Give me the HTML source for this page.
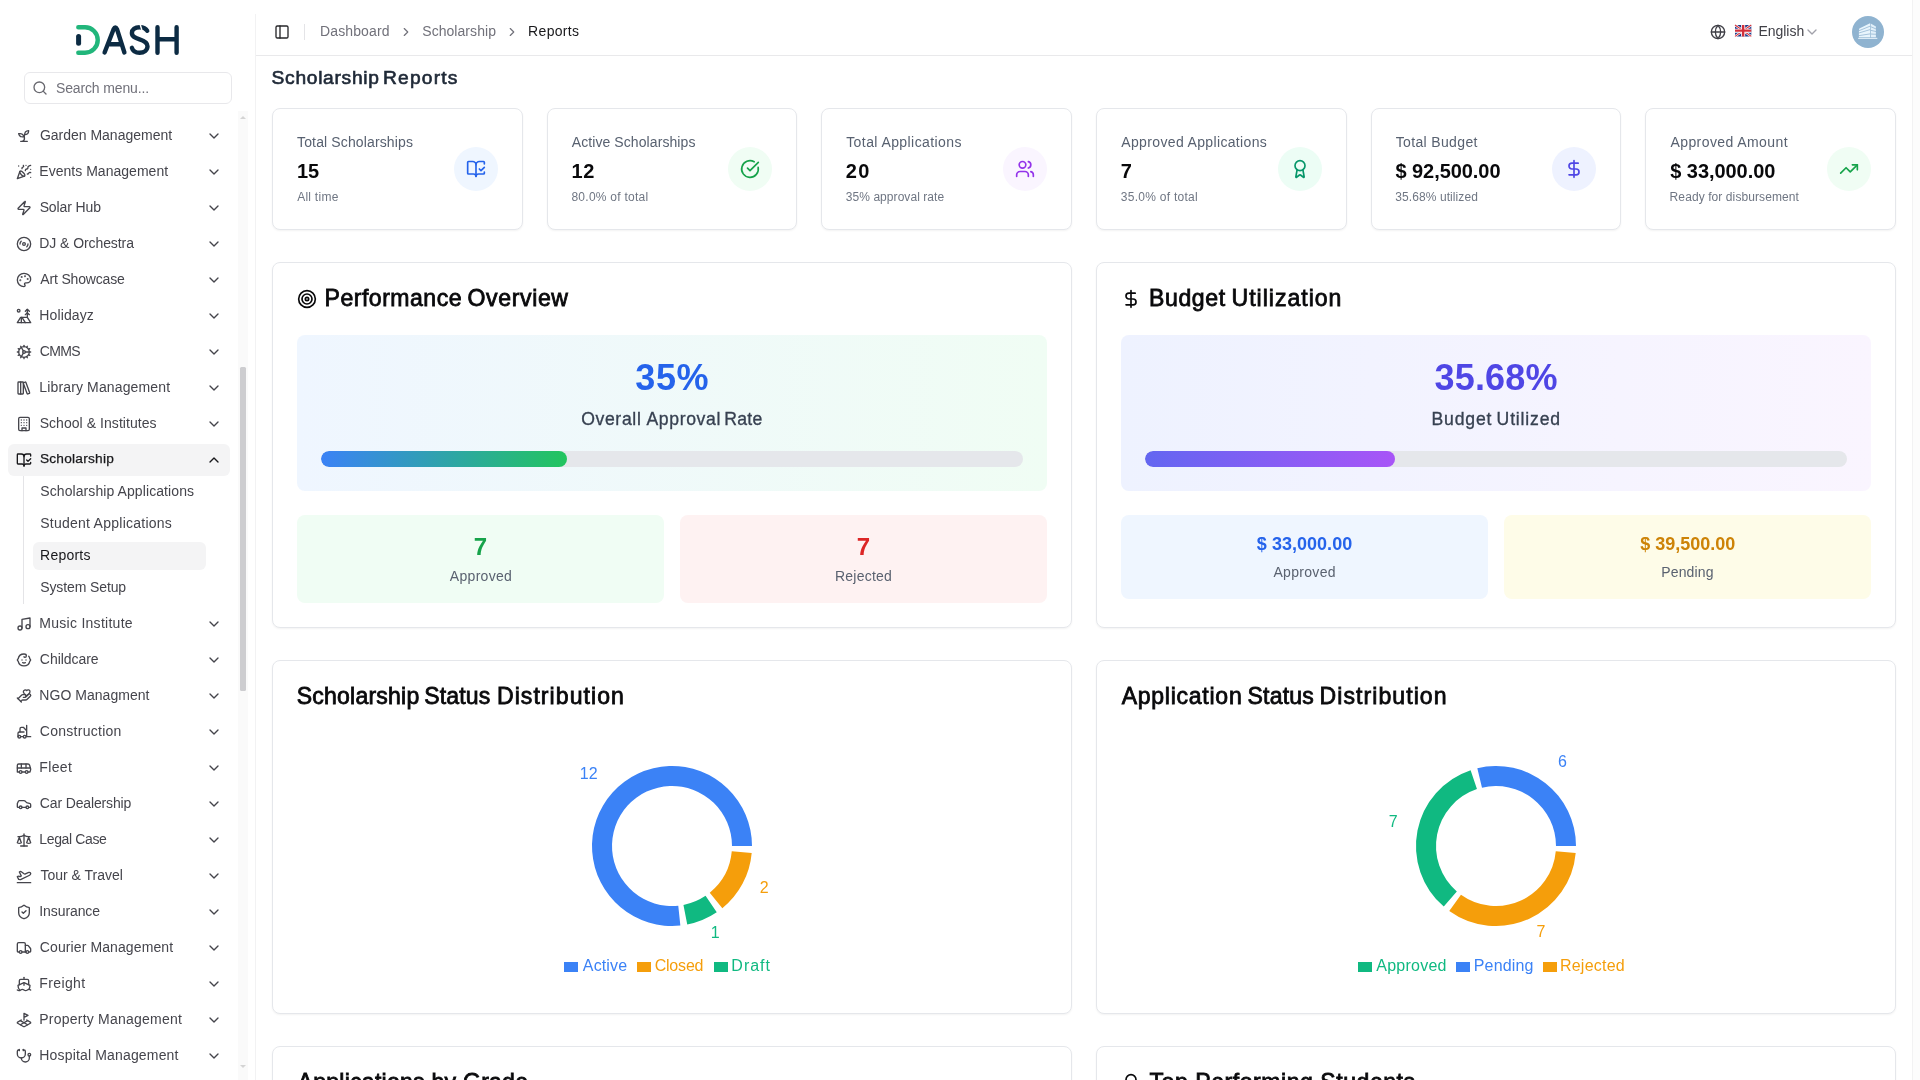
<!DOCTYPE html>
<html lang="en"><head><meta charset="utf-8"><title>Scholarship Reports</title>
<style>
*{box-sizing:border-box;margin:0;padding:0}
html,body{width:1920px;height:1080px;overflow:hidden;background:#fff;font-family:"Liberation Sans",sans-serif}
.sb{position:absolute;left:0;top:0;width:256px;height:1080px;will-change:transform}
.sb:after{content:"";position:absolute;left:255px;top:14px;width:1px;height:1066px;background:#f2f2f3}
main,header{position:absolute;left:0;top:0;width:1920px;will-change:transform}
main{height:1080px}
.hd{height:56px}
.hd:after{content:"";position:absolute;left:256px;top:55px;width:1656px;height:1px;background:#e9e9eb}
.ic{position:absolute;display:block;overflow:visible}
.t{position:absolute;white-space:nowrap;display:block}
.search{position:absolute;left:24px;top:72px;width:208px;height:32px;border:1px solid #e8e8eb;border-radius:6px;background:#fff}
.act{position:absolute;background:#f4f4f5;border-radius:6px}
.subline{position:absolute;left:23px;top:476px;width:1px;height:128px;background:#e4e4e7}
.sbtrack{position:absolute;left:238px;top:111px;width:10px;height:969px;background:#fafafa}
.sbthumb{position:absolute;left:240px;top:367px;width:6px;height:324px;background:#cdcdd0;border-radius:1.500px}
.arr{position:absolute;left:239.800px;width:0;height:0;border-left:3px solid transparent;border-right:3px solid transparent}
.arr.up{top:116px;border-bottom:3.500px solid #d4d4d4}
.arr.dn{top:1064.500px;border-top:3.500px solid #d4d4d4}
.sep{position:absolute;left:304px;top:24px;width:1px;height:16px;background:#e4e4e7}
.rstrip{position:absolute;left:1912px;top:0;width:8px;height:1080px;background:#fcfcfc;border-left:1px solid #f2f2f3}
.card{position:absolute;background:#fff;border:1px solid #e5e7eb;border-radius:8px;box-shadow:0 1px 2px rgba(0,0,0,.05)}
.circ{position:absolute;width:44px;height:44px;border-radius:50%}
.gbox{position:absolute;border-radius:8px}
.bar{position:absolute;height:16px;border-radius:8px;background:#e5e7eb;overflow:hidden}
.bar i{display:block;height:100%;border-radius:8px}
.lsq{position:absolute;top:961.700px;width:13.600px;height:10.500px}
</style></head>
<body>
<aside class="sb">
<svg class="ic" style="left:60px;top:10px;width:140px;height:60px" viewBox="60 10 140 60" fill="none" stroke-linecap="round" stroke-linejoin="round">
<path d="M78.3 27.2H85A12.75 12.75 0 0 1 85 52.7H78.3" stroke="#21b67b" stroke-width="4.4"/>
<path d="M78.6 36.6V43.2" stroke="#0c2b43" stroke-width="5"/>
<g stroke="#0c2b43" stroke-width="4.4">
<path d="M104.6 52.5 113.6 29.2Q115.3 25.6 117 29.2L124.4 52.5"/><path d="M110 44.2H120.6"/>
<path d="M147.2 30.8C146 28.6 143 27.2 139.6 27.2 135 27.2 131.9 29.6 131.9 33 131.9 36.6 135 37.9 139.6 39.3 144.2 40.7 147.5 42.2 147.5 46.3 147.5 50.1 144 52.7 139.6 52.700 135.600 52.7 132.800 50.800 131.900 47.800"/>
<path d="M157.500 27.200V52.700M176.600 27.200V52.700M157.500 39.300H176.600"/>
</g><path d="M140.100 24.300 141.900 30" stroke="#fff" stroke-width="1.400" stroke-linecap="butt"/></svg>
<div class="search"></div>
<svg class="ic" style="left:31.6px;top:79.8px;width:16px;height:16px;color:#68686f" viewBox="0 0 24 24" fill="none" stroke="currentColor" stroke-width="2" stroke-linecap="round" stroke-linejoin="round"><circle cx="11" cy="11" r="8"/><path d="m21 21-4.300-4.300"/></svg>
<span class="t" id="t0" style="left:56.02px;top:78.65px;font-size:14.0px;line-height:18px;font-weight:400;color:#71717a;letter-spacing:-0.144px">Search menu...</span>
<svg class="ic" style="left:16px;top:128px;width:16px;height:16px;color:#45454c" viewBox="0 0 24 24" fill="none" stroke="currentColor" stroke-width="2" stroke-linecap="round" stroke-linejoin="round"><path d="M7 20h10"/><path d="M10 20c5.5-2.5.8-6.4 3-10"/><path d="M9.5 9.4c1.1.8 1.8 2.2 2.3 3.7-2 .4-3.5.4-4.8-.3-1.200-.6-2.300-1.900-3-4.200 2.800-.5 4.400 0 5.500.8z"/><path d="M14.1 6a7 7 0 0 0-1.100 4c1.900-.1 3.300-.6 4.300-1.400 1-1 1.600-2.300 1.700-4.600-2.700.1-4 1-4.900 2z"/></svg>
<span class="t" id="t1" style="left:39.88px;top:126.15px;font-size:14.0px;line-height:18px;font-weight:400;color:#45454c;letter-spacing:-0.006px">Garden Management</span>
<svg class="ic" style="left:206px;top:128px;width:16px;height:16px;color:#45454c" viewBox="0 0 24 24" fill="none" stroke="currentColor" stroke-width="2" stroke-linecap="round" stroke-linejoin="round"><path d="m6 9 6 6 6-6"/></svg>
<svg class="ic" style="left:16px;top:164px;width:16px;height:16px;color:#45454c" viewBox="0 0 24 24" fill="none" stroke="currentColor" stroke-width="2" stroke-linecap="round" stroke-linejoin="round"><path d="M5.8 11.3 2 22l10.700-3.790"/><path d="M4 3h.01"/><path d="M22 8h.01"/><path d="M15 2h.01"/><path d="M22 20h.01"/><path d="m22 2-2.240.750a2.900 2.900 0 0 0-1.960 3.120c.1.860-.570 1.630-1.450 1.630h-.380c-.860 0-1.600.600-1.760 1.440L14 10"/><path d="m22 13-.820-.330c-.860-.340-1.820.200-1.980 1.110c-.110.700-.720 1.220-1.430 1.220H17"/><path d="m11 2 .330.820c.340.860-.200 1.820-1.110 1.980C9.520 4.900 9 5.520 9 6.230V7"/><path d="M11 13c1.930 1.930 2.830 4.170 2 5-.830.830-3.070-.070-5-2-1.930-1.930-2.830-4.170-2-5 .830-.830 3.070.070 5 2Z"/></svg>
<span class="t" id="t2" style="left:39.32px;top:162.15px;font-size:14.0px;line-height:18px;font-weight:400;color:#45454c;letter-spacing:0.023px">Events Management</span>
<svg class="ic" style="left:206px;top:164px;width:16px;height:16px;color:#45454c" viewBox="0 0 24 24" fill="none" stroke="currentColor" stroke-width="2" stroke-linecap="round" stroke-linejoin="round"><path d="m6 9 6 6 6-6"/></svg>
<svg class="ic" style="left:16px;top:200px;width:16px;height:16px;color:#45454c" viewBox="0 0 24 24" fill="none" stroke="currentColor" stroke-width="2" stroke-linecap="round" stroke-linejoin="round"><path d="M4 14a1 1 0 0 1-.78-1.630l9.900-10.200a.5.5 0 0 1 .860.460l-1.920 6.020A1 1 0 0 0 13 10h7a1 1 0 0 1 .780 1.630l-9.900 10.200a.5.5 0 0 1-.860-.460l1.920-6.020A1 1 0 0 0 11 14z"/></svg>
<span class="t" id="t3" style="left:39.64px;top:198.15px;font-size:14.0px;line-height:18px;font-weight:400;color:#45454c;letter-spacing:-0.116px">Solar Hub</span>
<svg class="ic" style="left:206px;top:200px;width:16px;height:16px;color:#45454c" viewBox="0 0 24 24" fill="none" stroke="currentColor" stroke-width="2" stroke-linecap="round" stroke-linejoin="round"><path d="m6 9 6 6 6-6"/></svg>
<svg class="ic" style="left:16px;top:236px;width:16px;height:16px;color:#45454c" viewBox="0 0 24 24" fill="none" stroke="currentColor" stroke-width="2" stroke-linecap="round" stroke-linejoin="round"><circle cx="12" cy="12" r="10"/><path d="M6 12c0-1.700.700-3.200 1.800-4.200"/><circle cx="12" cy="12" r="2"/><path d="M18 12c0 1.700-.700 3.200-1.800 4.200"/></svg>
<span class="t" id="t4" style="left:39.32px;top:234.15px;font-size:14.0px;line-height:18px;font-weight:400;color:#45454c;letter-spacing:-0.081px">DJ &amp; Orchestra</span>
<svg class="ic" style="left:206px;top:236px;width:16px;height:16px;color:#45454c" viewBox="0 0 24 24" fill="none" stroke="currentColor" stroke-width="2" stroke-linecap="round" stroke-linejoin="round"><path d="m6 9 6 6 6-6"/></svg>
<svg class="ic" style="left:16px;top:272px;width:16px;height:16px;color:#45454c" viewBox="0 0 24 24" fill="none" stroke="currentColor" stroke-width="2" stroke-linecap="round" stroke-linejoin="round"><circle cx="13.5" cy="6.5" r=".5" fill="currentColor"/><circle cx="17.5" cy="10.5" r=".5" fill="currentColor"/><circle cx="8.5" cy="7.5" r=".5" fill="currentColor"/><circle cx="6.5" cy="12.5" r=".5" fill="currentColor"/><path d="M12 2C6.5 2 2 6.5 2 12s4.500 10 10 10c.926 0 1.648-.746 1.648-1.688 0-.437-.180-.835-.437-1.125-.290-.289-.438-.652-.438-1.125a1.640 1.640 0 0 1 1.668-1.668h1.996c3.051 0 5.555-2.503 5.555-5.554C21.965 6.012 17.461 2 12 2z"/></svg>
<span class="t" id="t5" style="left:40.24px;top:270.15px;font-size:14.0px;line-height:18px;font-weight:400;color:#45454c;letter-spacing:-0.157px">Art Showcase</span>
<svg class="ic" style="left:206px;top:272px;width:16px;height:16px;color:#45454c" viewBox="0 0 24 24" fill="none" stroke="currentColor" stroke-width="2" stroke-linecap="round" stroke-linejoin="round"><path d="m6 9 6 6 6-6"/></svg>
<svg class="ic" style="left:16px;top:308px;width:16px;height:16px;color:#45454c" viewBox="0 0 24 24" fill="none" stroke="currentColor" stroke-width="2" stroke-linecap="round" stroke-linejoin="round"><circle cx="4" cy="4" r="2"/><path d="m14 5 3-3 3 3"/><path d="m14 10 3-3 3 3"/><path d="M17 14V2"/><path d="M17 14H7l-5 8h20Z"/><path d="M8 14v8"/><path d="m9 14 5 8"/></svg>
<span class="t" id="t6" style="left:39.32px;top:306.15px;font-size:14.0px;line-height:18px;font-weight:400;color:#45454c;letter-spacing:0.114px">Holidayz</span>
<svg class="ic" style="left:206px;top:308px;width:16px;height:16px;color:#45454c" viewBox="0 0 24 24" fill="none" stroke="currentColor" stroke-width="2" stroke-linecap="round" stroke-linejoin="round"><path d="m6 9 6 6 6-6"/></svg>
<svg class="ic" style="left:16px;top:344px;width:16px;height:16px;color:#45454c" viewBox="0 0 24 24" fill="none" stroke="currentColor" stroke-width="2" stroke-linecap="round" stroke-linejoin="round"><path d="M12 20a8 8 0 1 0 0-16 8 8 0 0 0 0 16Z"/><path d="M12 14a2 2 0 1 0 0-4 2 2 0 0 0 0 4Z"/><path d="M12 2v2"/><path d="M12 22v-2"/><path d="m17 20.660-1-1.730"/><path d="M11 10.270 7 3.340"/><path d="m20.660 17-1.730-1"/><path d="m3.340 7 1.730 1"/><path d="M14 12h8"/><path d="M2 12h2"/><path d="m20.660 7-1.730 1"/><path d="m3.340 17 1.730-1"/><path d="m17 3.340-1 1.730"/><path d="m11 13.730-4 6.930"/></svg>
<span class="t" id="t7" style="left:39.84px;top:342.15px;font-size:14.0px;line-height:18px;font-weight:400;color:#45454c;letter-spacing:-0.704px">CMMS</span>
<svg class="ic" style="left:206px;top:344px;width:16px;height:16px;color:#45454c" viewBox="0 0 24 24" fill="none" stroke="currentColor" stroke-width="2" stroke-linecap="round" stroke-linejoin="round"><path d="m6 9 6 6 6-6"/></svg>
<svg class="ic" style="left:16px;top:380px;width:16px;height:16px;color:#45454c" viewBox="0 0 24 24" fill="none" stroke="currentColor" stroke-width="2" stroke-linecap="round" stroke-linejoin="round"><rect width="8" height="18" x="3" y="3" rx="1"/><path d="M7 3v18"/><path d="M20.4 18.9c.2.5-.1 1.100-.6 1.300l-1.900.7c-.5.2-1.100-.1-1.300-.6L11.100 5.100c-.2-.5.100-1.100.6-1.300l1.900-.7c.5-.2 1.100.1 1.300.6Z"/></svg>
<span class="t" id="t8" style="left:39.32px;top:378.15px;font-size:14.0px;line-height:18px;font-weight:400;color:#45454c;letter-spacing:0.140px">Library Management</span>
<svg class="ic" style="left:206px;top:380px;width:16px;height:16px;color:#45454c" viewBox="0 0 24 24" fill="none" stroke="currentColor" stroke-width="2" stroke-linecap="round" stroke-linejoin="round"><path d="m6 9 6 6 6-6"/></svg>
<svg class="ic" style="left:16px;top:416px;width:16px;height:16px;color:#45454c" viewBox="0 0 24 24" fill="none" stroke="currentColor" stroke-width="2" stroke-linecap="round" stroke-linejoin="round"><rect width="16" height="20" x="4" y="2" rx="2" ry="2"/><path d="M9 22v-4h6v4"/><path d="M8 6h.01"/><path d="M16 6h.01"/><path d="M12 6h.01"/><path d="M12 10h.01"/><path d="M12 14h.01"/><path d="M16 10h.01"/><path d="M16 14h.01"/><path d="M8 10h.01"/><path d="M8 14h.01"/></svg>
<span class="t" id="t9" style="left:39.64px;top:414.15px;font-size:14.0px;line-height:18px;font-weight:400;color:#45454c;letter-spacing:0.057px">School &amp; Institutes</span>
<svg class="ic" style="left:206px;top:416px;width:16px;height:16px;color:#45454c" viewBox="0 0 24 24" fill="none" stroke="currentColor" stroke-width="2" stroke-linecap="round" stroke-linejoin="round"><path d="m6 9 6 6 6-6"/></svg>
<div class="act" style="left:8px;top:444px;width:222px;height:32px"></div>
<svg class="ic" style="left:16px;top:452px;width:16px;height:16px;color:#18181b" viewBox="0 0 24 24" fill="none" stroke="currentColor" stroke-width="2" stroke-linecap="round" stroke-linejoin="round"><path d="M12 21V7"/><path d="m16 12 2 2 4-4"/><path d="M22 6V4a1 1 0 0 0-1-1h-5a4 4 0 0 0-4 4 4 4 0 0 0-4-4H3a1 1 0 0 0-1 1v13a1 1 0 0 0 1 1h6a3 3 0 0 1 3 3 3 3 0 0 1 3-3h6a1 1 0 0 0 1-1v-1.300"/></svg>
<span class="t" id="t10" style="left:39.90px;top:450.15px;font-size:13.7px;line-height:18px;font-weight:400;-webkit-text-stroke:0.25px #18181b;color:#18181b;letter-spacing:0.240px">Scholarship</span>
<svg class="ic" style="left:206px;top:452px;width:16px;height:16px;color:#18181b" viewBox="0 0 24 24" fill="none" stroke="currentColor" stroke-width="2" stroke-linecap="round" stroke-linejoin="round"><path d="m18 15-6-6-6 6"/></svg>
<svg class="ic" style="left:16px;top:616px;width:16px;height:16px;color:#45454c" viewBox="0 0 24 24" fill="none" stroke="currentColor" stroke-width="2" stroke-linecap="round" stroke-linejoin="round"><path d="M9 18V5l12-2v13"/><circle cx="6" cy="18" r="3"/><circle cx="18" cy="16" r="3"/></svg>
<span class="t" id="t11" style="left:39.32px;top:614.15px;font-size:14.0px;line-height:18px;font-weight:400;color:#45454c;letter-spacing:0.271px">Music Institute</span>
<svg class="ic" style="left:206px;top:616px;width:16px;height:16px;color:#45454c" viewBox="0 0 24 24" fill="none" stroke="currentColor" stroke-width="2" stroke-linecap="round" stroke-linejoin="round"><path d="m6 9 6 6 6-6"/></svg>
<svg class="ic" style="left:16px;top:652px;width:16px;height:16px;color:#45454c" viewBox="0 0 24 24" fill="none" stroke="currentColor" stroke-width="2" stroke-linecap="round" stroke-linejoin="round"><path d="M9 12h.01"/><path d="M15 12h.01"/><path d="M10 16c.5.3 1.200.5 2 .5s1.500-.2 2-.5"/><path d="M19 6.3a9 9 0 0 1 1.800 3.900 2 2 0 0 1 0 3.600 9 9 0 0 1-17.600 0 2 2 0 0 1 0-3.600A9 9 0 0 1 12 3c2 0 3.500 1.100 3.500 2.500s-.9 2.500-2 2.500c-.8 0-1.500-.4-1.500-1"/></svg>
<span class="t" id="t12" style="left:39.84px;top:650.15px;font-size:14.0px;line-height:18px;font-weight:400;color:#45454c;letter-spacing:-0.049px">Childcare</span>
<svg class="ic" style="left:206px;top:652px;width:16px;height:16px;color:#45454c" viewBox="0 0 24 24" fill="none" stroke="currentColor" stroke-width="2" stroke-linecap="round" stroke-linejoin="round"><path d="m6 9 6 6 6-6"/></svg>
<svg class="ic" style="left:16px;top:688px;width:16px;height:16px;color:#45454c" viewBox="0 0 24 24" fill="none" stroke="currentColor" stroke-width="2" stroke-linecap="round" stroke-linejoin="round"><path d="M11 14h2a2 2 0 1 0 0-4h-3c-.6 0-1.100.2-1.400.6L3 16"/><path d="m7 20 1.600-1.400c.3-.4.800-.6 1.400-.6h4c1.100 0 2.100-.4 2.800-1.200l4.600-4.400a2 2 0 0 0-2.750-2.910l-4.200 3.900"/><path d="m2 15 6 6"/><path d="M19.5 8.5c.7-.7 1.500-1.600 1.500-2.700A2.730 2.730 0 0 0 16 4a2.780 2.780 0 0 0-5 1.800c0 1.200.8 2 1.500 2.800L16 12Z"/></svg>
<span class="t" id="t13" style="left:39.32px;top:686.15px;font-size:14.0px;line-height:18px;font-weight:400;color:#45454c;letter-spacing:0.034px">NGO Managment</span>
<svg class="ic" style="left:206px;top:688px;width:16px;height:16px;color:#45454c" viewBox="0 0 24 24" fill="none" stroke="currentColor" stroke-width="2" stroke-linecap="round" stroke-linejoin="round"><path d="m6 9 6 6 6-6"/></svg>
<svg class="ic" style="left:16px;top:724px;width:16px;height:16px;color:#45454c" viewBox="0 0 24 24" fill="none" stroke="currentColor" stroke-width="2" stroke-linecap="round" stroke-linejoin="round"><path d="M12 12H5a2 2 0 0 0-2 2v5"/><circle cx="13" cy="19" r="2"/><circle cx="5" cy="19" r="2"/><path d="M8 19h3m5-17v17h6M6 12V7c0-1.100.9-2 2-2h3l5 5"/></svg>
<span class="t" id="t14" style="left:39.84px;top:722.15px;font-size:14.0px;line-height:18px;font-weight:400;color:#45454c;letter-spacing:0.270px">Construction</span>
<svg class="ic" style="left:206px;top:724px;width:16px;height:16px;color:#45454c" viewBox="0 0 24 24" fill="none" stroke="currentColor" stroke-width="2" stroke-linecap="round" stroke-linejoin="round"><path d="m6 9 6 6 6-6"/></svg>
<svg class="ic" style="left:16px;top:760px;width:16px;height:16px;color:#45454c" viewBox="0 0 24 24" fill="none" stroke="currentColor" stroke-width="2" stroke-linecap="round" stroke-linejoin="round"><path d="M8 6v6"/><path d="M15 6v6"/><path d="M2 12h19.600"/><path d="M18 18h3s.5-1.700.8-2.800c.1-.4.2-.8.2-1.200 0-.4-.1-.8-.2-1.200l-1.400-5C20.100 6.800 19.100 6 18 6H4a2 2 0 0 0-2 2v10h3"/><circle cx="7" cy="18" r="2"/><path d="M9 18h5"/><circle cx="16" cy="18" r="2"/></svg>
<span class="t" id="t15" style="left:39.32px;top:758.15px;font-size:14.0px;line-height:18px;font-weight:400;color:#45454c;letter-spacing:0.336px">Fleet</span>
<svg class="ic" style="left:206px;top:760px;width:16px;height:16px;color:#45454c" viewBox="0 0 24 24" fill="none" stroke="currentColor" stroke-width="2" stroke-linecap="round" stroke-linejoin="round"><path d="m6 9 6 6 6-6"/></svg>
<svg class="ic" style="left:16px;top:796px;width:16px;height:16px;color:#45454c" viewBox="0 0 24 24" fill="none" stroke="currentColor" stroke-width="2" stroke-linecap="round" stroke-linejoin="round"><path d="M19 17h2c.6 0 1-.4 1-1v-3c0-.9-.7-1.700-1.500-1.900C18.700 10.600 16 10 16 10s-1.300-1.400-2.200-2.300c-.5-.4-1.100-.7-1.800-.7H5c-.6 0-1.100.4-1.400.9l-1.400 2.900A3.700 3.700 0 0 0 2 12v4c0 .6.400 1 1 1h2"/><circle cx="7" cy="17" r="2"/><path d="M9 17h6"/><circle cx="17" cy="17" r="2"/></svg>
<span class="t" id="t16" style="left:39.84px;top:794.15px;font-size:14.0px;line-height:18px;font-weight:400;color:#45454c;letter-spacing:-0.142px">Car Dealership</span>
<svg class="ic" style="left:206px;top:796px;width:16px;height:16px;color:#45454c" viewBox="0 0 24 24" fill="none" stroke="currentColor" stroke-width="2" stroke-linecap="round" stroke-linejoin="round"><path d="m6 9 6 6 6-6"/></svg>
<svg class="ic" style="left:16px;top:832px;width:16px;height:16px;color:#45454c" viewBox="0 0 24 24" fill="none" stroke="currentColor" stroke-width="2" stroke-linecap="round" stroke-linejoin="round"><path d="m16 16 3-8 3 8c-.87.65-1.920 1-3 1s-2.130-.35-3-1Z"/><path d="m2 16 3-8 3 8c-.87.65-1.920 1-3 1s-2.130-.35-3-1Z"/><path d="M7 21h10"/><path d="M12 3v18"/><path d="M3 7h2c2 0 5-1 7-2 2 1 5 2 7 2h2"/></svg>
<span class="t" id="t17" style="left:39.32px;top:830.15px;font-size:14.0px;line-height:18px;font-weight:400;color:#45454c;letter-spacing:-0.362px">Legal Case</span>
<svg class="ic" style="left:206px;top:832px;width:16px;height:16px;color:#45454c" viewBox="0 0 24 24" fill="none" stroke="currentColor" stroke-width="2" stroke-linecap="round" stroke-linejoin="round"><path d="m6 9 6 6 6-6"/></svg>
<svg class="ic" style="left:16px;top:868px;width:16px;height:16px;color:#45454c" viewBox="0 0 24 24" fill="none" stroke="currentColor" stroke-width="2" stroke-linecap="round" stroke-linejoin="round"><path d="M2 22h20"/><path d="M6.36 17.4 4 17l-2-4 1.100-.55a2 2 0 0 1 1.800 0l.17.1a2 2 0 0 0 1.800 0L8 12 5 6l.9-.45a2 2 0 0 1 2.090.2l4.020 3a2 2 0 0 0 2.100.2l4.190-2.060a2.410 2.410 0 0 1 1.730-.17L21 7a1.400 1.400 0 0 1 .87 1.990l-.38.76c-.23.46-.6.84-1.070 1.080L7.580 17.200a2 2 0 0 1-1.220.18Z"/></svg>
<span class="t" id="t18" style="left:40.49px;top:866.15px;font-size:14.0px;line-height:18px;font-weight:400;color:#45454c;letter-spacing:-0.014px">Tour &amp; Travel</span>
<svg class="ic" style="left:206px;top:868px;width:16px;height:16px;color:#45454c" viewBox="0 0 24 24" fill="none" stroke="currentColor" stroke-width="2" stroke-linecap="round" stroke-linejoin="round"><path d="m6 9 6 6 6-6"/></svg>
<svg class="ic" style="left:16px;top:904px;width:16px;height:16px;color:#45454c" viewBox="0 0 24 24" fill="none" stroke="currentColor" stroke-width="2" stroke-linecap="round" stroke-linejoin="round"><path d="M20 13c0 5-3.500 7.500-7.660 8.950a1 1 0 0 1-.67-.01C7.500 20.500 4 18 4 13V6a1 1 0 0 1 1-1c2 0 4.500-1.200 6.240-2.720a1.170 1.170 0 0 1 1.520 0C14.510 3.810 17 5 19 5a1 1 0 0 1 1 1z"/><path d="m9 12 2 2 4-4"/></svg>
<span class="t" id="t19" style="left:39.29px;top:902.15px;font-size:14.0px;line-height:18px;font-weight:400;color:#45454c;letter-spacing:-0.087px">Insurance</span>
<svg class="ic" style="left:206px;top:904px;width:16px;height:16px;color:#45454c" viewBox="0 0 24 24" fill="none" stroke="currentColor" stroke-width="2" stroke-linecap="round" stroke-linejoin="round"><path d="m6 9 6 6 6-6"/></svg>
<svg class="ic" style="left:16px;top:940px;width:16px;height:16px;color:#45454c" viewBox="0 0 24 24" fill="none" stroke="currentColor" stroke-width="2" stroke-linecap="round" stroke-linejoin="round"><path d="M14 18V6a2 2 0 0 0-2-2H4a2 2 0 0 0-2 2v11a1 1 0 0 0 1 1h2"/><path d="M15 18H9"/><path d="M19 18h2a1 1 0 0 0 1-1v-3.650a1 1 0 0 0-.22-.624l-3.480-4.350A1 1 0 0 0 17.520 8H14"/><circle cx="17" cy="18" r="2"/><circle cx="7" cy="18" r="2"/></svg>
<span class="t" id="t20" style="left:39.84px;top:938.15px;font-size:14.0px;line-height:18px;font-weight:400;color:#45454c;letter-spacing:0.102px">Courier Management</span>
<svg class="ic" style="left:206px;top:940px;width:16px;height:16px;color:#45454c" viewBox="0 0 24 24" fill="none" stroke="currentColor" stroke-width="2" stroke-linecap="round" stroke-linejoin="round"><path d="m6 9 6 6 6-6"/></svg>
<svg class="ic" style="left:16px;top:976px;width:16px;height:16px;color:#45454c" viewBox="0 0 24 24" fill="none" stroke="currentColor" stroke-width="2" stroke-linecap="round" stroke-linejoin="round"><path d="M12 10.189V14"/><path d="M12 2v3"/><path d="M19 13V7a2 2 0 0 0-2-2H7a2 2 0 0 0-2 2v6"/><path d="M19.38 20A11.600 11.600 0 0 0 21 14l-8.188-3.639a2 2 0 0 0-1.624 0L3 14a11.600 11.600 0 0 0 2.810 7.760"/><path d="M2 21c.6.5 1.200 1 2.500 1 2.500 0 2.500-2 5-2 1.300 0 1.900.5 2.500 1s1.200 1 2.500 1c2.500 0 2.500-2 5-2 1.300 0 1.900.5 2.500 1"/></svg>
<span class="t" id="t21" style="left:39.32px;top:974.15px;font-size:14.0px;line-height:18px;font-weight:400;color:#45454c;letter-spacing:0.367px">Freight</span>
<svg class="ic" style="left:206px;top:976px;width:16px;height:16px;color:#45454c" viewBox="0 0 24 24" fill="none" stroke="currentColor" stroke-width="2" stroke-linecap="round" stroke-linejoin="round"><path d="m6 9 6 6 6-6"/></svg>
<svg class="ic" style="left:16px;top:1012px;width:16px;height:16px;color:#45454c" viewBox="0 0 24 24" fill="none" stroke="currentColor" stroke-width="2" stroke-linecap="round" stroke-linejoin="round"><path d="m12 8 6-3-6-3v10"/><path d="m8 11.990-5.500 3.140a1 1 0 0 0 0 1.740l8.500 4.860a2 2 0 0 0 2 0l8.500-4.860a1 1 0 0 0 0-1.740L16 12"/><path d="m6.490 12.850 11.020 6.300"/><path d="M17.510 12.850 6.500 19.150"/></svg>
<span class="t" id="t22" style="left:39.32px;top:1010.15px;font-size:14.0px;line-height:18px;font-weight:400;color:#45454c;letter-spacing:0.220px">Property Management</span>
<svg class="ic" style="left:206px;top:1012px;width:16px;height:16px;color:#45454c" viewBox="0 0 24 24" fill="none" stroke="currentColor" stroke-width="2" stroke-linecap="round" stroke-linejoin="round"><path d="m6 9 6 6 6-6"/></svg>
<svg class="ic" style="left:16px;top:1048px;width:16px;height:16px;color:#45454c" viewBox="0 0 24 24" fill="none" stroke="currentColor" stroke-width="2" stroke-linecap="round" stroke-linejoin="round"><path d="M11 2v2"/><path d="M5 2v2"/><path d="M5 3H4a2 2 0 0 0-2 2v4a6 6 0 0 0 12 0V5a2 2 0 0 0-2-2h-1"/><path d="M8 15a6 6 0 0 0 12 0v-3"/><circle cx="20" cy="10" r="2"/></svg>
<span class="t" id="t23" style="left:39.32px;top:1046.15px;font-size:14.0px;line-height:18px;font-weight:400;color:#45454c;letter-spacing:0.163px">Hospital Management</span>
<svg class="ic" style="left:206px;top:1048px;width:16px;height:16px;color:#45454c" viewBox="0 0 24 24" fill="none" stroke="currentColor" stroke-width="2" stroke-linecap="round" stroke-linejoin="round"><path d="m6 9 6 6 6-6"/></svg>
<div class="subline"></div>
<div class="act" style="left:33px;top:541.5px;width:172.500px;height:28px"></div>
<span class="t" id="t24" style="left:40.26px;top:482.15px;font-size:14.0px;line-height:18px;font-weight:400;color:#45454c;letter-spacing:0.087px">Scholarship Applications</span>
<span class="t" id="t25" style="left:40.26px;top:514.15px;font-size:14.0px;line-height:18px;font-weight:400;color:#45454c;letter-spacing:0.248px">Student Applications</span>
<span class="t" id="t26" style="left:40.12px;top:546.15px;font-size:14.0px;line-height:18px;font-weight:400;color:#18181b;letter-spacing:0.216px">Reports</span>
<span class="t" id="t27" style="left:40.26px;top:578.15px;font-size:14.0px;line-height:18px;font-weight:400;color:#45454c;letter-spacing:-0.117px">System Setup</span>
<div class="sbtrack"></div><div class="sbthumb"></div>
<div class="arr up"></div><div class="arr dn"></div>
</aside>
<header class="hd">
<svg class="ic" style="left:274px;top:23.5px;width:16px;height:16px;color:#27272a" viewBox="0 0 24 24" fill="none" stroke="currentColor" stroke-width="2" stroke-linecap="round" stroke-linejoin="round"><rect width="18" height="18" x="3" y="3" rx="2"/><path d="M9 3v18"/></svg>
<div class="sep"></div>
<span class="t" id="t28" style="left:320.12px;top:22.15px;font-size:14.0px;line-height:18px;font-weight:400;color:#71717a;letter-spacing:0.107px">Dashboard</span>
<svg class="ic" style="left:398.5px;top:24.5px;width:14px;height:14px;color:#71717a" viewBox="0 0 24 24" fill="none" stroke="currentColor" stroke-width="2" stroke-linecap="round" stroke-linejoin="round"><path d="m9 18 6-6-6-6"/></svg>
<span class="t" id="t29" style="left:422.26px;top:22.15px;font-size:14.0px;line-height:18px;font-weight:400;color:#71717a;letter-spacing:0.052px">Scholarship</span>
<svg class="ic" style="left:504.5px;top:24.5px;width:14px;height:14px;color:#71717a" viewBox="0 0 24 24" fill="none" stroke="currentColor" stroke-width="2" stroke-linecap="round" stroke-linejoin="round"><path d="m9 18 6-6-6-6"/></svg>
<span class="t" id="t30" style="left:528.12px;top:22.15px;font-size:14.0px;line-height:18px;font-weight:400;color:#18181b;letter-spacing:0.315px">Reports</span>
<svg class="ic" style="left:1709.85px;top:23.6px;width:16px;height:16px;color:#3f3f46" viewBox="0 0 24 24" fill="none" stroke="currentColor" stroke-width="2" stroke-linecap="round" stroke-linejoin="round"><circle cx="12" cy="12" r="10"/><path d="M12 2a14.500 14.500 0 0 0 0 20 14.500 14.500 0 0 0 0-20"/><path d="M2 12h20"/></svg>
<svg class="ic" style="left:1734.600px;top:25.200px;width:16.300px;height:11.400px" viewBox="0 0 60 44" preserveAspectRatio="none">
<rect width="60" height="44" rx="4" fill="#1f3a8a"/>
<path d="M0 0 60 44M60 0 0 44" stroke="#fff" stroke-width="9"/>
<path d="M0 0 60 44M60 0 0 44" stroke="#d22f3a" stroke-width="4"/>
<path d="M30 0V44M0 22H60" stroke="#fff" stroke-width="15"/>
<path d="M30 0V44M0 22H60" stroke="#d22f3a" stroke-width="9"/></svg>
<span class="t" id="t31" style="left:1758.43px;top:22.15px;font-size:14.0px;line-height:18px;font-weight:400;color:#3f3f46;letter-spacing:-0.027px">English</span>
<svg class="ic" style="left:1803.9px;top:24px;width:16px;height:16px;color:#a1a1aa" viewBox="0 0 24 24" fill="none" stroke="currentColor" stroke-width="2" stroke-linecap="round" stroke-linejoin="round"><path d="m6 9 6 6 6-6"/></svg>
<svg class="ic" style="left:1852px;top:15.900px;width:32px;height:32px" viewBox="0 0 32 32">
<circle cx="16" cy="16" r="16" fill="#8fb3d0"/>
<path d="M7.300 12.500 18.050 7.200V21.300H6.900V14.900Z" fill="#e9f5fc"/>
<path d="M18.700 7.400 23.900 10.400V21.300H18.700Z" fill="#e1f0fa"/>
<path d="M6.500 14.900 18.050 10.200M6.500 17.100 18.050 13.600M6.500 19.700 18.050 17.900M18.700 10.700 24.200 13M18.700 14.300 24.200 15.600M18.700 18 24.200 18.300" stroke="#8fb3d0" stroke-width=".75" fill="none"/>
<path d="M6.200 22.350H25.300" stroke="#e9f5fc" stroke-width="1"/>
</svg>
</header>
<div class="rstrip"></div>
<main>
<span class="t" id="t32" style="left:271.60px;top:65.07px;font-size:19.21px;line-height:26px;font-weight:400;-webkit-text-stroke:0.66px #1f2937;color:#1f2937;letter-spacing:0.705px">Scholarship</span><span class="t" id="t33" style="left:383.03px;top:65.07px;font-size:19.21px;line-height:26px;font-weight:400;-webkit-text-stroke:0.66px #1f2937;color:#1f2937;letter-spacing:1.192px">Reports</span>
<div class="card" style="left:272.00px;top:108px;width:250.67px;height:122px"></div>
<span class="t" id="t34" style="left:297.07px;top:132.75px;font-size:14.0px;line-height:18px;font-weight:400;color:#586170;letter-spacing:0.131px">Total Scholarships</span>
<span class="t" id="t35" style="left:296.92px;top:157.67px;font-size:20.0px;line-height:26px;font-weight:700;color:#09090b;letter-spacing:-0.147px">15</span>
<span class="t" id="t36" style="left:297.13px;top:188.64px;font-size:12.0px;line-height:16px;font-weight:400;color:#6f7683;letter-spacing:0.266px">All time</span>
<div class="circ" style="left:453.67px;top:147px;background:#eff6ff"></div>
<svg class="ic" style="left:465.66666666666663px;top:159px;width:20px;height:20px;color:#2563eb" viewBox="0 0 24 24" fill="none" stroke="currentColor" stroke-width="2" stroke-linecap="round" stroke-linejoin="round"><path d="M12 21V7"/><path d="m16 12 2 2 4-4"/><path d="M22 6V4a1 1 0 0 0-1-1h-5a4 4 0 0 0-4 4 4 4 0 0 0-4-4H3a1 1 0 0 0-1 1v13a1 1 0 0 0 1 1h6a3 3 0 0 1 3 3 3 3 0 0 1 3-3h6a1 1 0 0 0 1-1v-1.300"/></svg>
<div class="card" style="left:546.67px;top:108px;width:250.67px;height:122px"></div>
<span class="t" id="t37" style="left:571.73px;top:132.75px;font-size:14.0px;line-height:18px;font-weight:400;color:#586170;letter-spacing:0.085px">Active Scholarships</span>
<span class="t" id="t38" style="left:571.61px;top:157.67px;font-size:20.0px;line-height:26px;font-weight:700;color:#09090b;letter-spacing:0.493px">12</span>
<span class="t" id="t39" style="left:571.44px;top:188.64px;font-size:12.0px;line-height:16px;font-weight:400;color:#6f7683;letter-spacing:0.259px">80.0% of total</span>
<div class="circ" style="left:728.33px;top:147px;background:#f0fdf4"></div>
<svg class="ic" style="left:740.3333333333333px;top:159px;width:20px;height:20px;color:#16a34a" viewBox="0 0 24 24" fill="none" stroke="currentColor" stroke-width="2" stroke-linecap="round" stroke-linejoin="round"><path d="M21.801 10A10 10 0 1 1 17 3.335"/><path d="m9 11 3 3L22 4"/></svg>
<div class="card" style="left:821.33px;top:108px;width:250.67px;height:122px"></div>
<span class="t" id="t40" style="left:846.19px;top:132.75px;font-size:14.0px;line-height:18px;font-weight:400;color:#586170;letter-spacing:0.421px">Total Applications</span>
<span class="t" id="t41" style="left:845.83px;top:157.67px;font-size:20.0px;line-height:26px;font-weight:700;color:#09090b;letter-spacing:1.257px">20</span>
<span class="t" id="t42" style="left:845.83px;top:188.64px;font-size:12.0px;line-height:16px;font-weight:400;color:#6f7683;letter-spacing:0.054px">35% approval rate</span>
<div class="circ" style="left:1003.00px;top:147px;background:#faf5ff"></div>
<svg class="ic" style="left:1015.0px;top:159px;width:20px;height:20px;color:#9333ea" viewBox="0 0 24 24" fill="none" stroke="currentColor" stroke-width="2" stroke-linecap="round" stroke-linejoin="round"><path d="M16 21v-2a4 4 0 0 0-4-4H6a4 4 0 0 0-4 4v2"/><circle cx="9" cy="7" r="4"/><path d="M22 21v-2a4 4 0 0 0-3-3.870"/><path d="M16 3.130a4 4 0 0 1 0 7.750"/></svg>
<div class="card" style="left:1096.00px;top:108px;width:250.67px;height:122px"></div>
<span class="t" id="t43" style="left:1121.30px;top:132.75px;font-size:14.0px;line-height:18px;font-weight:400;color:#586170;letter-spacing:0.350px">Approved Applications</span>
<span class="t" id="t44" style="left:1120.64px;top:157.67px;font-size:20.0px;line-height:26px;font-weight:700;color:#09090b;letter-spacing:0.000px">7</span>
<span class="t" id="t45" style="left:1120.76px;top:188.64px;font-size:12.0px;line-height:16px;font-weight:400;color:#6f7683;letter-spacing:0.271px">35.0% of total</span>
<div class="circ" style="left:1277.67px;top:147px;background:#ecfdf5"></div>
<svg class="ic" style="left:1289.6666666666667px;top:159px;width:20px;height:20px;color:#059669" viewBox="0 0 24 24" fill="none" stroke="currentColor" stroke-width="2" stroke-linecap="round" stroke-linejoin="round"><path d="m15.477 12.890 1.515 8.526a.5.5 0 0 1-.81.47l-3.580-2.687a1 1 0 0 0-1.197 0l-3.586 2.686a.5.5 0 0 1-.81-.469l1.514-8.526"/><circle cx="12" cy="8" r="6"/></svg>
<div class="card" style="left:1370.67px;top:108px;width:250.67px;height:122px"></div>
<span class="t" id="t46" style="left:1395.69px;top:132.75px;font-size:14.0px;line-height:18px;font-weight:400;color:#586170;letter-spacing:0.353px">Total Budget</span>
<span class="t" id="t47" style="left:1395.44px;top:157.67px;font-size:20.0px;line-height:26px;font-weight:700;color:#09090b;letter-spacing:-0.056px">$ 92,500.00</span>
<span class="t" id="t48" style="left:1395.32px;top:188.64px;font-size:12.0px;line-height:16px;font-weight:400;color:#6f7683;letter-spacing:0.085px">35.68% utilized</span>
<div class="circ" style="left:1552.33px;top:147px;background:#eef2ff"></div>
<svg class="ic" style="left:1564.3333333333333px;top:159px;width:20px;height:20px;color:#4f46e5" viewBox="0 0 24 24" fill="none" stroke="currentColor" stroke-width="2" stroke-linecap="round" stroke-linejoin="round"><line x1="12" x2="12" y1="2" y2="22"/><path d="M17 5H9.500a3.500 3.500 0 0 0 0 7h5a3.500 3.500 0 0 1 0 7H6"/></svg>
<div class="card" style="left:1645.33px;top:108px;width:250.67px;height:122px"></div>
<span class="t" id="t49" style="left:1670.43px;top:132.75px;font-size:14.0px;line-height:18px;font-weight:400;color:#586170;letter-spacing:0.422px">Approved Amount</span>
<span class="t" id="t50" style="left:1670.26px;top:157.67px;font-size:20.0px;line-height:26px;font-weight:700;color:#09090b;letter-spacing:-0.058px">$ 33,000.00</span>
<span class="t" id="t51" style="left:1669.62px;top:188.64px;font-size:12.0px;line-height:16px;font-weight:400;color:#6f7683;letter-spacing:0.089px">Ready for disbursement</span>
<div class="circ" style="left:1827.00px;top:147px;background:#f0fdf4"></div>
<svg class="ic" style="left:1838.9999999999998px;top:159px;width:20px;height:20px;color:#16a34a" viewBox="0 0 24 24" fill="none" stroke="currentColor" stroke-width="2" stroke-linecap="round" stroke-linejoin="round"><polyline points="22 7 13.500 15.500 8.500 10.500 2 17"/><polyline points="16 7 22 7 22 13"/></svg>
<div class="card" style="left:272px;top:262px;width:800px;height:366px"></div>
<svg class="ic" style="left:297px;top:288.5px;width:20px;height:20px;color:#09090b" viewBox="0 0 24 24" fill="none" stroke="currentColor" stroke-width="2" stroke-linecap="round" stroke-linejoin="round"><circle cx="12" cy="12" r="10"/><circle cx="12" cy="12" r="6"/><circle cx="12" cy="12" r="2"/></svg>
<span class="t" id="t52" style="left:324.60px;top:283.18px;font-size:23.05px;line-height:31px;font-weight:400;-webkit-text-stroke:0.79px #09090b;color:#09090b;letter-spacing:0.498px">Performance</span><span class="t" id="t53" style="left:467.55px;top:283.18px;font-size:23.05px;line-height:31px;font-weight:400;-webkit-text-stroke:0.79px #09090b;color:#09090b;letter-spacing:0.630px">Overview</span>
<div class="gbox" style="left:297px;top:335px;width:750px;height:156px;background:linear-gradient(90deg,#eff6ff,#f0fdf4)"></div>
<span class="t" id="t54" style="left:635.23px;top:354.33px;font-size:36.0px;line-height:47px;font-weight:700;color:#2563eb;letter-spacing:0.659px">35%</span>
<span class="t" id="t55" style="left:581.13px;top:408.46px;font-size:17.61px;line-height:23px;font-weight:400;-webkit-text-stroke:0.32px #374151;color:#374151;letter-spacing:0.651px">Overall</span><span class="t" id="t56" style="left:646.44px;top:408.46px;font-size:17.61px;line-height:23px;font-weight:400;-webkit-text-stroke:0.32px #374151;color:#374151;letter-spacing:0.628px">Approval</span><span class="t" id="t57" style="left:724.15px;top:408.46px;font-size:17.61px;line-height:23px;font-weight:400;-webkit-text-stroke:0.32px #374151;color:#374151;letter-spacing:0.344px">Rate</span>
<div class="bar" style="left:321px;top:451px;width:702px"><i style="width:35%;background:linear-gradient(90deg,#3b82f6,#22c55e)"></i></div>
<div class="gbox" style="left:297px;top:515px;width:367px;height:88px;background:#f0fdf4"></div>
<div class="gbox" style="left:680px;top:515px;width:367px;height:88px;background:#fef2f2"></div>
<span class="t" id="t58" style="left:473.74px;top:531.38px;font-size:24.0px;line-height:31px;font-weight:700;color:#16a34a;letter-spacing:0.000px">7</span>
<span class="t" id="t59" style="left:449.86px;top:566.65px;font-size:14.0px;line-height:18px;font-weight:400;color:#5a6270;letter-spacing:0.286px">Approved</span>
<span class="t" id="t60" style="left:856.74px;top:531.38px;font-size:24.0px;line-height:31px;font-weight:700;color:#dc2626;letter-spacing:0.000px">7</span>
<span class="t" id="t61" style="left:835.00px;top:566.65px;font-size:14.0px;line-height:18px;font-weight:400;color:#5a6270;letter-spacing:0.219px">Rejected</span>
<div class="card" style="left:1096px;top:262px;width:800px;height:366px"></div>
<svg class="ic" style="left:1121px;top:288.5px;width:20px;height:20px;color:#09090b" viewBox="0 0 24 24" fill="none" stroke="currentColor" stroke-width="2" stroke-linecap="round" stroke-linejoin="round"><line x1="12" x2="12" y1="2" y2="22"/><path d="M17 5H9.500a3.500 3.500 0 0 0 0 7h5a3.500 3.500 0 0 1 0 7H6"/></svg>
<span class="t" id="t62" style="left:1149.06px;top:283.18px;font-size:23.05px;line-height:31px;font-weight:400;-webkit-text-stroke:0.79px #09090b;color:#09090b;letter-spacing:0.588px">Budget</span><span class="t" id="t63" style="left:1231.55px;top:283.18px;font-size:23.05px;line-height:31px;font-weight:400;-webkit-text-stroke:0.79px #09090b;color:#09090b;letter-spacing:0.998px">Utilization</span>
<div class="gbox" style="left:1121px;top:335px;width:750px;height:156px;background:linear-gradient(90deg,#eef2ff,#faf5ff)"></div>
<span class="t" id="t64" style="left:1434.50px;top:354.43px;font-size:36.0px;line-height:47px;font-weight:700;color:#4f46e5;letter-spacing:0.170px">35.68%</span>
<span class="t" id="t65" style="left:1431.48px;top:408.46px;font-size:17.61px;line-height:23px;font-weight:400;-webkit-text-stroke:0.32px #374151;color:#374151;letter-spacing:0.834px">Budget</span><span class="t" id="t66" style="left:1496.58px;top:408.46px;font-size:17.61px;line-height:23px;font-weight:400;-webkit-text-stroke:0.32px #374151;color:#374151;letter-spacing:0.834px">Utilized</span>
<div class="bar" style="left:1145px;top:451px;width:702px"><i style="width:35.68%;background:linear-gradient(90deg,#6366f1,#a855f7)"></i></div>
<div class="gbox" style="left:1121px;top:515px;width:367px;height:84px;background:#eff6ff"></div>
<div class="gbox" style="left:1504px;top:515px;width:367px;height:84px;background:#fefce8"></div>
<span class="t" id="t67" style="left:1256.86px;top:533.26px;font-size:18.0px;line-height:23px;font-weight:700;color:#2563eb;letter-spacing:0.023px">$ 33,000.00</span>
<span class="t" id="t68" style="left:1273.38px;top:562.65px;font-size:14.0px;line-height:18px;font-weight:400;color:#5a6270;letter-spacing:0.326px">Approved</span>
<span class="t" id="t69" style="left:1640.25px;top:533.26px;font-size:18.0px;line-height:23px;font-weight:700;color:#cd8307;letter-spacing:-0.005px">$ 39,500.00</span>
<span class="t" id="t70" style="left:1661.25px;top:562.65px;font-size:14.0px;line-height:18px;font-weight:400;color:#5a6270;letter-spacing:0.144px">Pending</span>
<div class="card" style="left:272px;top:660px;width:800px;height:354px"></div>
<div class="card" style="left:1096px;top:660px;width:800px;height:354px"></div>
<span class="t" id="t71" style="left:296.76px;top:681.18px;font-size:23.05px;line-height:31px;font-weight:400;-webkit-text-stroke:0.79px #09090b;color:#09090b;letter-spacing:0.207px">Scholarship</span><span class="t" id="t72" style="left:424.27px;top:681.18px;font-size:23.05px;line-height:31px;font-weight:400;-webkit-text-stroke:0.79px #09090b;color:#09090b;letter-spacing:0.145px">Status</span><span class="t" id="t73" style="left:496.94px;top:681.18px;font-size:23.05px;line-height:31px;font-weight:400;-webkit-text-stroke:0.79px #09090b;color:#09090b;letter-spacing:1.055px">Distribution</span>
<span class="t" id="t74" style="left:1121.68px;top:681.18px;font-size:23.05px;line-height:31px;font-weight:400;-webkit-text-stroke:0.79px #09090b;color:#09090b;letter-spacing:0.729px">Application</span><span class="t" id="t75" style="left:1247.53px;top:681.18px;font-size:23.05px;line-height:31px;font-weight:400;-webkit-text-stroke:0.79px #09090b;color:#09090b;letter-spacing:0.209px">Status</span><span class="t" id="t76" style="left:1319.58px;top:681.18px;font-size:23.05px;line-height:31px;font-weight:400;-webkit-text-stroke:0.79px #09090b;color:#09090b;letter-spacing:1.063px">Distribution</span>
<svg class="ic" style="left:0;top:0;width:1920px;height:1080px" viewBox="0 0 1920 1080"><path d="M752.00 846.00A80 80 0 1 0 680.36 925.56L678.27 905.67A60 60 0 1 1 732.00 846.00Z" fill="#3b82f6"/><path d="M687.26 924.53A80 80 0 0 0 716.74 912.32L705.55 895.74A60 60 0 0 1 683.45 904.90Z" fill="#10b981"/><path d="M722.35 908.17A80 80 0 0 0 751.70 852.97L731.77 851.23A60 60 0 0 1 709.76 892.63Z" fill="#f59e0b"/><path d="M1576.00 846.00A80 80 0 0 0 1477.32 768.21L1481.99 787.66A60 60 0 0 1 1556.00 846.00Z" fill="#3b82f6"/><path d="M1470.62 770.13A80 80 0 0 0 1443.78 906.61L1456.83 891.45A60 60 0 0 1 1476.96 789.10Z" fill="#10b981"/><path d="M1449.26 910.93A80 80 0 0 0 1575.70 852.97L1555.77 851.23A60 60 0 0 1 1460.95 894.69Z" fill="#f59e0b"/></svg>
<span class="t" id="t77" style="left:579.69px;top:763.04px;font-size:16.0px;line-height:21px;font-weight:400;color:#3b82f6;letter-spacing:0.050px">12</span>
<span class="t" id="t78" style="left:710.86px;top:922.34px;font-size:16.0px;line-height:21px;font-weight:400;color:#10b981;letter-spacing:0.000px">1</span>
<span class="t" id="t79" style="left:759.79px;top:876.90px;font-size:16.0px;line-height:21px;font-weight:400;color:#f59e0b;letter-spacing:0.000px">2</span>
<span class="t" id="t80" style="left:1557.96px;top:751.42px;font-size:16.0px;line-height:21px;font-weight:400;color:#3b82f6;letter-spacing:0.000px">6</span>
<span class="t" id="t81" style="left:1388.80px;top:810.66px;font-size:16.0px;line-height:21px;font-weight:400;color:#10b981;letter-spacing:0.000px">7</span>
<span class="t" id="t82" style="left:1536.48px;top:920.86px;font-size:16.0px;line-height:21px;font-weight:400;color:#f59e0b;letter-spacing:0.000px">7</span>
<div class="lsq" style="left:564.2px;background:#3b82f6"></div>
<span class="t" id="t83" style="left:582.86px;top:955.16px;font-size:16.0px;line-height:21px;font-weight:400;color:#3b82f6;letter-spacing:0.132px">Active</span>
<div class="lsq" style="left:637px;background:#f59e0b"></div>
<span class="t" id="t84" style="left:654.64px;top:955.16px;font-size:16.0px;line-height:21px;font-weight:400;color:#f59e0b;letter-spacing:-0.185px">Closed</span>
<div class="lsq" style="left:714.2px;background:#10b981"></div>
<span class="t" id="t85" style="left:731.35px;top:955.16px;font-size:16.0px;line-height:21px;font-weight:400;color:#10b981;letter-spacing:0.984px">Draft</span>
<div class="lsq" style="left:1358px;background:#10b981"></div>
<span class="t" id="t86" style="left:1376.32px;top:955.16px;font-size:16.0px;line-height:21px;font-weight:400;color:#10b981;letter-spacing:0.244px">Approved</span>
<div class="lsq" style="left:1456.2px;background:#3b82f6"></div>
<span class="t" id="t87" style="left:1473.77px;top:955.16px;font-size:16.0px;line-height:21px;font-weight:400;color:#3b82f6;letter-spacing:0.167px">Pending</span>
<div class="lsq" style="left:1543px;background:#f59e0b"></div>
<span class="t" id="t88" style="left:1559.98px;top:955.16px;font-size:16.0px;line-height:21px;font-weight:400;color:#f59e0b;letter-spacing:0.225px">Rejected</span>
<div class="card" style="left:272px;top:1046px;width:800px;height:200px"></div>
<div class="card" style="left:1096px;top:1046px;width:800px;height:200px"></div>
<span class="t" id="t89" style="left:297.60px;top:1067.18px;font-size:23.05px;line-height:31px;font-weight:400;-webkit-text-stroke:0.79px #09090b;color:#09090b;letter-spacing:0.247px">Applications by Grade</span>
<svg class="ic" style="left:1121px;top:1072.5px;width:20px;height:20px;color:#09090b" viewBox="0 0 24 24" fill="none" stroke="currentColor" stroke-width="2" stroke-linecap="round" stroke-linejoin="round"><path d="m15.477 12.890 1.515 8.526a.5.5 0 0 1-.81.47l-3.580-2.687a1 1 0 0 0-1.197 0l-3.586 2.686a.5.5 0 0 1-.81-.469l1.514-8.526"/><circle cx="12" cy="8" r="6"/></svg>
<span class="t" id="t90" style="left:1149.54px;top:1067.18px;font-size:23.05px;line-height:31px;font-weight:400;-webkit-text-stroke:0.79px #09090b;color:#09090b;letter-spacing:0.540px">Top Performing Students</span>
</main>
</body></html>
